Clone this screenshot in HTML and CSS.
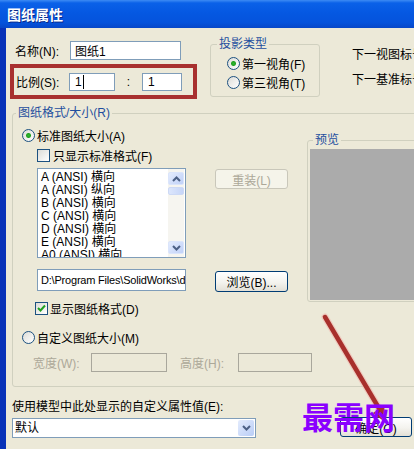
FILE: index.html
```html
<!DOCTYPE html>
<html lang="zh-CN">

<head>
    <meta charset="UTF-8">
    <meta name="viewport" content="width=device-width, initial-scale=1.0">
    <title>图纸属性</title>
    <link rel="stylesheet" href="styles.css">
</head>

<body>
    <div class="window">
        <div class="titlebar"><span class="title">图纸属性</span></div>
        <div class="frame">
            <div class="client">
                <div class="top">
                    <div class="naming">
                        <div class="name-row">
                            <span class="lbl">名称(N):</span>
                            <div class="textbox name-box">图纸1</div>
                        </div>
                        <div class="scale-row">
                            <span class="lbl lbl-scale">比例(S):</span>
                            <div class="textbox scale-box"><span class="caret">1</span></div>
                            <span class="colon">:</span>
                            <div class="textbox scale-box scale-box-2">1</div>
                        </div>
                    </div>

                    <fieldset class="group proj">
                        <legend>投影类型</legend>
                        <div class="option"><span class="radio checked"></span>第一视角(F)</div>
                        <div class="option"><span class="radio"></span>第三视角(T)</div>
                    </fieldset>

                    <div class="labels">
                        <div>下一视图标号(V):</div>
                        <div class="labels-2">下一基准标号(U):</div>
                    </div>
                </div>

                <fieldset class="group sheet">
                    <legend>图纸格式/大小(R)</legend>
                    <div class="sheet-body">
                        <div class="upper">
                            <div class="left-col">
                                <div class="row"><span class="radio checked"></span>标准图纸大小(A)</div>
                                <div class="row std-only"><span class="checkbox"></span>只显示标准格式(F)</div>
                                <div class="listbox">
                                    <div class="items">
                                        <div>A (ANSI) 横向</div>
                                        <div>A (ANSI) 纵向</div>
                                        <div>B (ANSI) 横向</div>
                                        <div>C (ANSI) 横向</div>
                                        <div>D (ANSI) 横向</div>
                                        <div>E (ANSI) 横向</div>
                                        <div>A0 (ANSI) 横向</div>
                                        <div>A1 (ANSI) 横向</div>
                                    </div>
                                    <div class="scrollbar">
                                        <div class="sb-btn">
                                            <svg width="9" height="6" viewBox="0 0 9 6"><path d="M1 5 L4.5 1.5 L8 5" fill="none" stroke="#4d6185" stroke-width="2"/></svg>
                                        </div>
                                        <div class="sb-thumb"></div>
                                        <div class="sb-track"></div>
                                        <div class="sb-btn">
                                            <svg width="9" height="6" viewBox="0 0 9 6"><path d="M1 1 L4.5 4.5 L8 1" fill="none" stroke="#4d6185" stroke-width="2"/></svg>
                                        </div>
                                    </div>
                                </div>
                                <div class="textbox path"><span class="path-text">D:\Program Files\SolidWorks\data\a - landscape.slddrt</span></div>
                                <div class="row fmt-check">
                                    <span class="checkbox">
                                        <svg width="11" height="11" viewBox="0 0 11 11"><path d="M2 5 L4.5 7.5 L9 2.5" fill="none" stroke="#21a121" stroke-width="2"/></svg>
                                    </span>显示图纸格式(D)
                                </div>
                            </div>

                            <div class="mid-col">
                                <button class="btn btn-disabled reload">重装(L)</button>
                                <button class="btn browse">浏览(B)...</button>
                            </div>

                            <fieldset class="group preview">
                                <legend>预览</legend>
                                <div class="preview-area"></div>
                            </fieldset>
                        </div>

                        <div class="row custom"><span class="radio"></span>自定义图纸大小(M)</div>
                        <div class="size-row">
                            <span class="size-lbl">宽度(W):</span>
                            <div class="size-box"></div>
                            <span class="size-lbl size-lbl-2">高度(H):</span>
                            <div class="size-box size-box-2"></div>
                        </div>
                    </div>
                </fieldset>

                <div class="props-label">使用模型中此处显示的自定义属性值(E):</div>
                <div class="props-row">
                    <div class="combo">
                        <span class="combo-text">默认</span>
                        <span class="combo-drop">
                            <svg width="9" height="6" viewBox="0 0 9 6"><path d="M1 1 L4.5 4.5 L8 1" fill="none" stroke="#4d6185" stroke-width="2"/></svg>
                        </span>
                    </div>
                    <button class="btn ok">确定(O)</button>
                </div>
            </div>
        </div>
    </div>

    <!-- annotation drawn over the screenshot -->
    <svg class="arrow" width="414" height="449" viewBox="0 0 414 449">
        <line x1="325" y1="317" x2="380" y2="410" stroke="#f2b8b0" stroke-width="7" stroke-linecap="round" opacity="0.6"/>
        <line x1="325" y1="317" x2="380" y2="410" stroke="#a8302c" stroke-width="4.5" stroke-linecap="round"/>
        <polygon points="386,423 373,413 384,405" fill="#a8302c"/>
    </svg>
    <div class="watermark">最需网</div>
</body>

</html>
```

FILE: styles.css
```css
* {
    margin: 0;
    padding: 0;
    box-sizing: border-box;
}

body {
    position: relative;
    width: 414px;
    height: 449px;
    overflow: hidden;
    font-family: "Liberation Sans", "Noto Sans CJK SC", sans-serif;
    font-size: 12px;
    color: #000;
    background-color: #ece9d8;
}

.window {
    width: 440px;
    height: 449px;
    display: flex;
    flex-direction: column;
}

.titlebar {
    flex: none;
    height: 28px;
    display: flex;
    align-items: center;
    padding-left: 7px;
    background: linear-gradient(#3d8bf4 0, #0a61e8 3px, #0558e2 45%, #0553dc 80%, #0747c8 100%);
}

.title {
    color: #fff;
    font-size: 14px;
    font-weight: bold;
    text-shadow: 1px 1px 0 #0a2a8a;
}

.frame {
    flex: 1;
    border-left: 6px solid #1157e4;
    border-image: linear-gradient(to right, #0832b8, #1c68f0 45%, #0b50d8) 1;
    background-color: #ece9d8;
}

.client {
    padding: 0 10px 0 4px;
}

/* top part: name, scale, projection */
.top {
    display: flex;
    align-items: flex-start;
}

.top > * {
    flex: none;
}

.naming {
    padding-top: 13px;
}

.name-row {
    display: flex;
    align-items: center;
    height: 19px;
    padding-left: 5px;
}

.lbl {
    width: 55px;
}

.lbl-scale {
    width: 53px;
}

.textbox {
    display: flex;
    align-items: center;
    background-color: #fff;
    border: 1px solid #7f9db9;
    padding-left: 4px;
    white-space: nowrap;
    overflow: hidden;
}

.name-box {
    width: 111px;
    height: 19px;
}

.scale-row {
    display: flex;
    align-items: center;
    width: 187px;
    height: 35px;
    margin-top: 4px;
    padding-left: 2px;
    border: 4px solid #a8302f;
}

.scale-box {
    width: 46px;
    height: 18px;
    padding-left: 5px;
}

.scale-box-2 {
    width: 40px;
}

.caret {
    padding-right: 1px;
    border-right: 1px solid #000;
    line-height: 14px;
}

.colon {
    width: 27px;
    text-align: center;
}

/* group boxes */
.group {
    min-width: 0;
    border: 1px solid #d0d0bf;
    border-radius: 3px;
}

.group legend {
    padding: 0 2px;
    line-height: 16px;
    color: #1f4f9e;
}

.proj {
    width: 110px;
    margin: 8px 0 0 13px;
    padding: 2px 0 4px;
}

.proj legend {
    margin-left: 6px;
}

.option {
    display: flex;
    align-items: center;
    height: 19px;
    padding-left: 16px;
    white-space: nowrap;
}

.radio {
    flex: none;
    width: 13px;
    height: 13px;
    margin-right: 2px;
    border: 1px solid #1c5180;
    border-radius: 50%;
    background: linear-gradient(135deg, #dcdcd7, #fff);
}

.radio.checked {
    background: radial-gradient(circle, #2fb82f 0, #21a121 2px, transparent 3px), linear-gradient(135deg, #dcdcd7, #fff);
}

.checkbox {
    flex: none;
    display: flex;
    align-items: center;
    justify-content: center;
    width: 13px;
    height: 13px;
    border: 1px solid #1c5180;
    background: linear-gradient(135deg, #dcdcd7, #fff);
}

.labels {
    margin: 19px 0 0 32px;
    white-space: nowrap;
    line-height: 16px;
}

.labels-2 {
    margin-top: 9px;
}

/* sheet format group */
.sheet {
    margin: 6px 0 0 2px;
}

.sheet legend {
    margin-left: 3px;
}

.sheet-body {
    padding: 6px 0 14px 9px;
}

.upper {
    display: flex;
    align-items: flex-start;
}

.left-col {
    flex: none;
    width: 164px;
}

.row {
    display: flex;
    align-items: center;
    height: 16px;
    white-space: nowrap;
}

.std-only {
    margin: 4px 0 0 15px;
}

.std-only .checkbox {
    margin-right: 3px;
}

.listbox {
    display: flex;
    width: 149px;
    height: 90px;
    margin: 5px 0 0 15px;
    border: 1px solid #7f9db9;
    background-color: #fff;
    overflow: hidden;
}

.items {
    flex: 1;
    padding: 2px 0 0 3px;
    line-height: 13px;
    white-space: nowrap;
    overflow: hidden;
}

.scrollbar {
    flex: none;
    display: flex;
    flex-direction: column;
    width: 16px;
    margin-right: 1px;
    padding: 3px 0;
    background-color: #f6f5f0;
}

.sb-btn {
    display: flex;
    align-items: center;
    justify-content: center;
    height: 13px;
    border: 1px solid #dbe5fb;
    border-radius: 2px;
    background: linear-gradient(135deg, #e4ecfd, #c0d1f8);
}

.sb-thumb {
    height: 8px;
    margin-top: 2px;
    border: 1px solid #cdd9f5;
    border-radius: 2px;
    background: linear-gradient(90deg, #dce6fc, #c6d5f8);
}

.sb-track {
    flex: 1;
}

.path {
    width: 149px;
    height: 22px;
    margin: 11px 0 0 15px;
    padding-left: 3px;
}

.path-text {
    font-size: 11px;
    letter-spacing: -0.2px;
}

.fmt-check {
    margin: 9px 0 0 13px;
}

.fmt-check .checkbox {
    margin-right: 2px;
}

.mid-col {
    flex: none;
    display: flex;
    flex-direction: column;
    margin-left: 29px;
}

.btn {
    display: flex;
    align-items: center;
    justify-content: center;
    width: 73px;
    height: 20px;
    border: 1px solid #003c74;
    border-radius: 3px;
    background: linear-gradient(#fff, #f4f3ee 55%, #e3e0d6);
    font: inherit;
    color: #000;
}

.btn-disabled {
    border-color: #c9c7ba;
    background: #f5f4ea;
    color: #aca899;
}

.reload {
    margin-top: 42px;
}

.browse {
    height: 21px;
    margin-top: 82px;
}

.preview {
    flex: 1;
    margin: 5px 0 0 19px;
}

.preview legend {
    margin-left: 5px;
}

.preview-area {
    height: 151px;
    margin: 1px 0 1px 2px;
    background-color: #ababab;
}

.custom {
    margin-top: 13px;
}

.size-row {
    display: flex;
    align-items: center;
    height: 19px;
    margin-top: 8px;
    padding-left: 11px;
    color: #aca899;
}

.size-lbl {
    width: 58px;
}

.size-lbl-2 {
    margin-left: 13px;
}

.size-box {
    width: 76px;
    height: 19px;
    border: 1px solid #a9a79c;
}

.size-box-2 {
    width: 74px;
}

/* bottom: custom property + OK */
.props-label {
    margin: 12px 0 0 2px;
    line-height: 16px;
}

.props-row {
    display: flex;
    align-items: flex-start;
    margin: 2px 0 0 2px;
}

.combo {
    display: flex;
    width: 244px;
    height: 20px;
    margin-top: 1px;
    border: 1px solid #7f9db9;
    background-color: #fff;
}

.combo-text {
    flex: 1;
    padding-left: 2px;
    line-height: 18px;
}

.combo-drop {
    display: flex;
    align-items: center;
    justify-content: center;
    width: 16px;
    margin: 1px;
    border-radius: 2px;
    background: linear-gradient(135deg, #e4ecfd, #b9cdf6);
}

.ok {
    flex: none;
    width: 72px;
    margin-left: 84px;
}

/* annotation overlays */
.arrow {
    position: absolute;
    left: 0;
    top: 0;
    pointer-events: none;
}

.watermark {
    position: absolute;
    left: 302px;
    top: 400px;
    font-family: "Noto Sans CJK SC", sans-serif;
    font-size: 31px;
    font-weight: bold;
    line-height: 31px;
    color: #8a00ff;
}
```
